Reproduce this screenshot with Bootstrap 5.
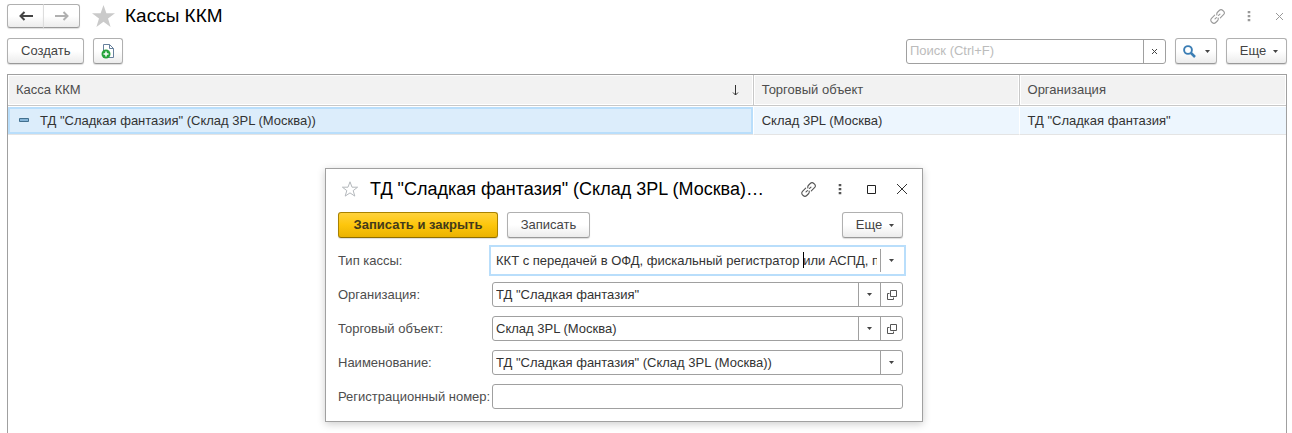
<!DOCTYPE html>
<html lang="ru">
<head>
<meta charset="utf-8">
<meta name="viewport" content="width=device-width, initial-scale=1">
<title>Кассы ККМ</title>
<link rel="stylesheet" href="https://cdn.jsdelivr.net/npm/bootstrap@5.3.0/dist/css/bootstrap.min.css">
<style>
body { font-family: "Liberation Sans", Arial, sans-serif; font-size: 13px; line-height: 16px; color: #333; background: #fff; }
.workspace { padding: 4px 5px 0 7px; }
.page-head { gap: 9px; }
.page-title { font-size: 19px; line-height: 24px; color: #000; }
.tool-btn { --bs-btn-font-size: 13px; --bs-btn-line-height: 16px; --bs-btn-padding-x: 13px; --bs-btn-padding-y: 0; --bs-btn-border-radius: 3px; --bs-btn-color: #444; --bs-btn-border-color: #b0b0b0; height: 26px; background: linear-gradient(#fff 50%, #ececec); border-bottom-color: #999; box-shadow: 0 1px 1px #ddd; display: inline-flex; align-items: center; justify-content: center; white-space: nowrap; }
.nav-pair .tool-btn { height: 24px; width: 37px; padding: 0; }
.nav-pair .tool-btn:first-child { border-right-color: #ddd; }
.nav-pair .tool-btn:last-child { border-left-color: #ddd; }
.tool-row { gap: 9px; margin-top: 10px; }
.icon-tool { width: 30px; padding: 0; }
.search-tool { width: 42px; padding: 0; gap: 9px; }
.more-tool { width: 61px; padding: 0 0 0 5px; gap: 7px; }
.save-tool { --bs-btn-border-color: #a98200; border-bottom-color: #8e6d00; background: linear-gradient(#ffd23c, #fdc60c 50%, #ebb200); font-weight: bold; width: 160px; color: #433a1a; }
.write-tool { width: 83px; }
.plain-btn { border: 0; background: none; padding: 0; display: inline-flex; align-items: center; justify-content: center; color: #555; }
.window-tools { gap: 17px; }
.page-tools { color: #999; }
.page-tools .plain-btn { color: inherit; }
.dialog-tools { margin-right: -4px; }
.field-box { height: 25px; border: 1px solid #a0a0a0; border-radius: 3px; background: #fff; display: flex; position: relative; min-width: 0; }
.field-box input { flex: 1 1 0; min-width: 0; border: 0; outline: 0; padding: 0 0 0 3px; margin-right: 3px; background: transparent; color: #333; font-size: 13px; }
.field-box input::placeholder { color: #bcbcbc; opacity: 1; }
.field-box .plain-btn { width: 22px; flex: none; border-left: 1px solid #a0a0a0; }
.field-box.active-field { border-color: #fff; border-radius: 0; box-shadow: 0 0 0 1px #fff, 0 0 0 3px #b9defb; }
.text-caret { position: absolute; left: 310px; top: 3px; width: 1px; height: 16px; background: #000; }
.search-field { width: 260px; }
.grid-frame { border: 1px solid #a0a0a0; border-bottom: 0; margin-top: 10px; }
.cash-table { width: 100%; table-layout: fixed; border-collapse: separate; border-spacing: 0; }
.cash-table th { height: 31px; font-weight: normal; color: #4d4d4d; background: #f2f2f2; border-bottom: 1px solid #c8c8c8; border-right: 1px solid #c8c8c8; padding: 0 8px; box-shadow: inset 0 0 0 1px #fff; }
.cash-table td { height: 29px; background: #edf6fe; padding: 0 8px; border-top: 1px solid #fff; border-bottom: 1px solid #e4e4e4; border-right: 1px solid #fff; }
.cash-table th:last-child, .cash-table td:last-child { border-right: 0; }
.cash-table td.current-cell { background: #dcedfb; box-shadow: inset 0 0 0 2px #b9defb; padding-left: 11px; }
.col-main { width: 58.35%; }
.col-object { width: 20.8%; }
.dialog-window { position: absolute; left: 325px; top: 168px; width: 598px; background: #fff; border: 1px solid #a0a0a0; box-shadow: 0 2px 8px rgba(0,0,0,.2); padding: 8px 19px 12px 12px; }
.dialog-title { font-size: 18px; line-height: 24px; color: #000; }
.dialog-actions { gap: 9px; margin-top: 11px; }
.form-lines { display: grid; grid-template-columns: 150px minmax(0, 1fr); gap: 9px 4px; margin-top: 10px; align-items: center; }
.form-lines label { color: #4d4d4d; white-space: nowrap; }
</style>
<script src="https://cdn.jsdelivr.net/npm/bootstrap@5.3.0/dist/js/bootstrap.bundle.min.js"></script>
</head>
<body>
<svg class="d-none">
  <symbol id="chain" viewBox="0 0 17 17"><g transform="rotate(-45 8.500 8.500)" fill="none" stroke="currentColor" stroke-width="1.1" stroke-linecap="round"><path d="M7.500 5.500H3A2.500 2.500 0 0 0 .5 8v1A2.500 2.500 0 0 0 3 11.500h2.500A2.500 2.500 0 0 0 7.800 10M9.500 11.500H14A2.500 2.500 0 0 0 16.500 9V8A2.500 2.500 0 0 0 14 5.500h-2.500A2.500 2.500 0 0 0 9.200 7M5 8.500h2M10 8.500h2"/></g></symbol>
  <symbol id="dots" viewBox="0 0 4 12"><path fill="currentColor" d="M.7 1h2.600v2.300H.7zM.7 5h2.600v2.300H.7zM.7 9h2.600v2.300H.7z"/></symbol>
  <symbol id="caret" viewBox="0 0 5 3"><path fill="#444" d="M0 0h5L2.500 3z"/></symbol>
  <symbol id="windows" viewBox="0 0 10 10"><path fill="none" stroke="currentColor" d="M3.500.5h6v6h-6zM2.500 3.500h-2v6h6v-2"/></symbol>
</svg>
<div class="workspace d-flex flex-column min-vh-100">
  <header class="page-head d-flex align-items-center">
    <div class="btn-group nav-pair">
      <button class="btn tool-btn" aria-label="Назад"><svg width="14" height="10" viewBox="0 0 14 10"><path d="M5.500 1 1.500 5l4 4M1.500 5H14" fill="none" stroke="#444" stroke-width="2"/></svg></button>
      <button class="btn tool-btn" aria-label="Вперед"><svg width="14" height="10" viewBox="0 0 14 10"><path d="m8.500 1 4 4-4 4M12.500 5H0" fill="none" stroke="#b0b0b0" stroke-width="2"/></svg></button>
    </div>
    <button class="plain-btn" aria-label="В избранное"><svg width="27" height="22" viewBox="0 0 27 22"><path fill="#cacaca" d="m14.500 0 2.900 8.300h8.600l-7 5.100 2.600 8.600-7.100-5.200L7.400 22 10 13.400 3 8.300h8.600z"/></svg></button>
    <h1 class="page-title fw-normal mb-0">Кассы ККМ</h1>
    <div class="window-tools page-tools d-flex align-items-center ms-auto">
      <button class="plain-btn" aria-label="Ссылка"><svg width="17" height="17"><use href="#chain"/></svg></button>
      <button class="plain-btn px-1" aria-label="Меню"><svg width="4" height="12"><use href="#dots"/></svg></button>
      <button class="plain-btn px-1" aria-label="Закрыть"><svg width="7" height="7" viewBox="0 0 7 7"><path d="m0 0 7 7M7 0 0 7" stroke="currentColor"/></svg></button>
    </div>
  </header>
  <div class="tool-row d-flex align-items-center">
    <button class="btn tool-btn">Создать</button>
    <button class="btn tool-btn icon-tool" aria-label="Создать копированием"><svg width="14" height="15" viewBox="0 0 14 15"><path d="M2.500 7V.500h6l4 4v9H8" fill="#fff" stroke="#66809c"/><path d="M8.500.5v4h4" fill="none" stroke="#66809c"/><circle cx="5" cy="10" r="4.500" fill="#27a33c"/><path d="M5 7.500v5M2.500 10h5" stroke="#fff" stroke-width="1.500"/></svg></button>
    <div class="field-box search-field ms-auto"><input type="text" placeholder="Поиск (Ctrl+F)" aria-label="Поиск"><button class="plain-btn" aria-label="Очистить"><svg width="5" height="5" viewBox="0 0 5 5"><path d="m0 0 5 5M5 0 0 5" stroke="#444"/></svg></button></div>
    <button class="btn tool-btn search-tool" aria-label="Найти"><svg width="13" height="13" viewBox="0 0 13 13"><circle cx="5" cy="5" r="3.900" fill="none" stroke="#3a7db4" stroke-width="1.900"/><path d="m8 8 4 4" stroke="#3a7db4" stroke-width="2.500"/></svg><svg width="5" height="3"><use href="#caret"/></svg></button>
    <button class="btn tool-btn more-tool">Еще <svg width="5" height="3"><use href="#caret"/></svg></button>
  </div>
  <main class="grid-frame flex-grow-1">
    <table class="cash-table">
      <colgroup><col class="col-main"><col class="col-object"><col></colgroup>
      <thead><tr>
        <th><div class="d-flex justify-content-between align-items-center">Касса ККМ <svg width="16" height="11" viewBox="0 0 16 11"><path d="M6.500 0v10" stroke="#333"/><path d="M4 7.500l2.500 2.500L9 7.500" fill="none" stroke="#333"/></svg></div></th>
        <th>Торговый объект</th><th>Организация</th>
      </tr></thead>
      <tbody><tr>
        <td class="current-cell"><div class="d-flex align-items-center"><svg width="21" height="5" viewBox="0 0 21 5"><path d="M.5.5h9v3h-9z" fill="#86b5d8" stroke="#42708f"/></svg>ТД "Сладкая фантазия" (Склад 3PL (Москва))</div></td>
        <td>Склад 3PL (Москва)</td><td>ТД "Сладкая фантазия"</td>
      </tr></tbody>
    </table>
  </main>
</div>
<section class="dialog-window" role="dialog" aria-labelledby="dlg-title">
  <div class="d-flex align-items-center">
    <button class="plain-btn" aria-label="В избранное"><svg width="24" height="16" viewBox="0 0 24 16"><path fill="none" stroke="#b4b8bc" d="m12 .8 2 5.400h5.600l-4.400 3.400 1.600 5.500L12 11.900l-4.800 3.200 1.600-5.500-4.400-3.400H10z"/></svg></button>
    <h2 id="dlg-title" class="dialog-title fw-normal mb-0 ms-2">ТД "Сладкая фантазия" (Склад 3PL (Москва)…</h2>
    <div class="window-tools dialog-tools d-flex align-items-center ms-auto">
      <button class="plain-btn" aria-label="Ссылка"><svg width="17" height="17"><use href="#chain"/></svg></button>
      <button class="plain-btn px-1" aria-label="Меню"><svg width="4" height="12"><use href="#dots"/></svg></button>
      <button class="plain-btn px-1" aria-label="Развернуть"><svg width="9" height="9" viewBox="0 0 9 9"><path d="M.5.5h8v8h-8z" fill="none" stroke="#222"/></svg></button>
      <button class="plain-btn" aria-label="Закрыть"><svg width="10" height="10" viewBox="0 0 10 10"><path d="m0 0 10 10M10 0 0 10" stroke="#333"/></svg></button>
    </div>
  </div>
  <div class="dialog-actions d-flex">
    <button class="btn tool-btn save-tool px-0">Записать и закрыть</button>
    <button class="btn tool-btn write-tool px-0">Записать</button>
    <button class="btn tool-btn more-tool ms-auto">Еще <svg width="5" height="3"><use href="#caret"/></svg></button>
  </div>
  <form class="form-lines">
    <label for="f-type">Тип кассы:</label>
    <div class="field-box active-field"><input id="f-type" type="text" value="ККТ с передачей в ОФД, фискальный регистратор или АСПД, принтер чеков"><span class="text-caret"></span><button type="button" class="plain-btn" aria-label="Выбрать"><svg width="5" height="3"><use href="#caret"/></svg></button></div>
    <label for="f-org">Организация:</label>
    <div class="field-box"><input id="f-org" type="text" value="ТД &quot;Сладкая фантазия&quot;"><button type="button" class="plain-btn" aria-label="Выбрать"><svg width="5" height="3"><use href="#caret"/></svg></button><button type="button" class="plain-btn" aria-label="Открыть"><svg width="10" height="10"><use href="#windows"/></svg></button></div>
    <label for="f-obj">Торговый объект:</label>
    <div class="field-box"><input id="f-obj" type="text" value="Склад 3PL (Москва)"><button type="button" class="plain-btn" aria-label="Выбрать"><svg width="5" height="3"><use href="#caret"/></svg></button><button type="button" class="plain-btn" aria-label="Открыть"><svg width="10" height="10"><use href="#windows"/></svg></button></div>
    <label for="f-name">Наименование:</label>
    <div class="field-box"><input id="f-name" type="text" value="ТД &quot;Сладкая фантазия&quot; (Склад 3PL (Москва))"><button type="button" class="plain-btn" aria-label="Выбрать"><svg width="5" height="3"><use href="#caret"/></svg></button></div>
    <label for="f-reg">Регистрационный номер:</label>
    <div class="field-box"><input id="f-reg" type="text"></div>
  </form>
</section>
</body>
</html>
